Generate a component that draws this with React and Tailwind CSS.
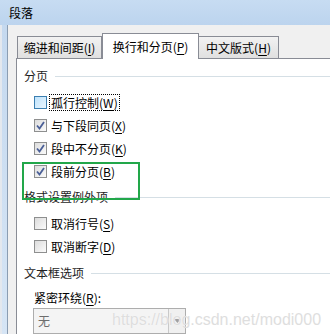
const font = { fontFamily: '"Noto Sans CJK SC", "Microsoft YaHei", sans-serif' };

const Key = ({ k }) => (
  <>
    (<span className="underline underline-offset-2">{k}</span>)
  </>
);

const Box = ({ checked, hot }) => (
  <span
    className={
      "flex h-[13px] w-[13px] shrink-0 items-center justify-center border " +
      (hot
        ? "border-[#3c7fb1] bg-gradient-to-br from-[#bfe3fc] to-[#e8f5fe]"
        : "border-[#8e8f8f] bg-gradient-to-br from-[#dcdcdc] to-[#fbfbfb]")
    }
  >
    {checked && (
      <svg width="9" height="9" viewBox="0 0 9 9">
        <path d="M1 4.5 L3.5 7.5 L8 1" fill="none" stroke="#4a5f97" strokeWidth="1.8" />
      </svg>
    )}
  </span>
);

const Row = ({ label, k, checked, hot }) => (
  <div className="flex h-[23px] items-center pl-[17px]">
    <Box checked={checked} hot={hot} />
    <span
      className={
        "ml-[3px] px-[1px] leading-[15px] text-[12px] text-black " +
        (hot ? "outline outline-1 outline-dotted outline-black" : "")
      }
    >
      {label}
      <Key k={k} />
    </span>
  </div>
);

const Heading = ({ children, mt }) => (
  <div className={"flex h-5 items-center pl-[7px] " + mt}>
    <span className="text-[12px] text-[#1e1e1e]">{children}</span>
    <span className="ml-[7px] mr-0 h-px flex-1 bg-[#d5dfe5]" />
  </div>
);

export default function App() {
  return (
    <div
      className="relative flex h-[334px] w-[330px] flex-col overflow-hidden bg-[#cfe0f3]"
      style={font}
    >
      {/* title bar */}
      <div className="flex h-[25px] shrink-0 items-center bg-gradient-to-b from-[#c7dcf2] to-[#bcd4ee] pl-[9px]">
        <span className="text-[12px] text-black">段落</span>
      </div>

      <div className="flex flex-1">
        {/* left window frame */}
        <div className="flex w-2 shrink-0">
          <div className="w-[2px] bg-[#e4e8ee]" />
          <div className="flex-1 bg-gradient-to-b from-[#c5d9ef] to-[#d6e5f5]" />
          <div className="w-px bg-[#8b9db2]" />
        </div>

        {/* dialog body */}
        <div className="flex flex-1 flex-col bg-[#f0f0f0] pl-2 pt-2">
          {/* tabs */}
          <div className="flex h-[25px] items-end pl-px">
            <div className="flex h-[22px] w-[85px] items-center justify-center border border-b-0 border-[#898c95] bg-gradient-to-b from-[#f2f2f2] to-[#e0e0e0] text-[12px] text-black">
              缩进和间距<Key k="I" />
            </div>
            <div className="relative z-10 -mb-px flex h-[26px] w-[97px] items-center justify-center border border-b-0 border-[#898c95] bg-white text-[12px] text-black">
              换行和分页<Key k="P" />
            </div>
            <div className="flex h-[22px] w-[80px] items-center justify-center border border-b-0 border-l-0 border-[#898c95] bg-gradient-to-b from-[#f2f2f2] to-[#e0e0e0] text-[12px] text-black">
              中文版式<Key k="H" />
            </div>
          </div>

          {/* panel */}
          <div className="flex flex-1 flex-col border-l border-t border-[#898c95] bg-white pt-[7px]">
            <Heading>分页</Heading>
            <div className="mt-[5px]">
              <Row label="孤行控制" k="W" hot />
              <Row label="与下段同页" k="X" checked />
              <Row label="段中不分页" k="K" checked />
              <Row label="段前分页" k="B" checked />
            </div>
            <Heading mt="mt-1">格式设置例外项</Heading>
            <div className="mt-[5px]">
              <Row label="取消行号" k="S" />
              <Row label="取消断字" k="D" />
            </div>
            <Heading mt="mt-[5px]">文本框选项</Heading>
            <div className="mt-[7px] pl-[17px] text-[12px] leading-4 text-black">
              紧密环绕<Key k="R" />:
            </div>
            <div className="ml-4 mt-[2px] flex h-[26px] w-[153px] border border-[#adadad] bg-[#f4f4f4]">
              <span className="flex flex-1 items-center pl-[4px] text-[12px] text-[#6d6d6d]">无</span>
              <span className="flex w-[17px] items-center justify-center border-l border-[#c9c9c9] bg-[#f0f0f0]">
                <svg width="7" height="4" viewBox="0 0 7 4">
                  <path d="M0 0 L3.5 4 L7 0 Z" fill="#a0a0a0" />
                </svg>
              </span>
            </div>
          </div>
        </div>
      </div>

      {/* highlight box drawn over the dialog */}
      <div className="pointer-events-none absolute left-[22px] top-[162px] h-[38px] w-[118px] border-2 border-[#22a74a]" />

      {/* watermark */}
      <div
        className="pointer-events-none absolute left-[112px] top-[308px] text-[16px] text-[#dedede]"
        style={{ fontFamily: '"Liberation Sans", Arial, sans-serif', textShadow: "0 0 1px #fff" }}
      >
        https://blog.csdn.net/modi000
      </div>
    </div>
  );
}
